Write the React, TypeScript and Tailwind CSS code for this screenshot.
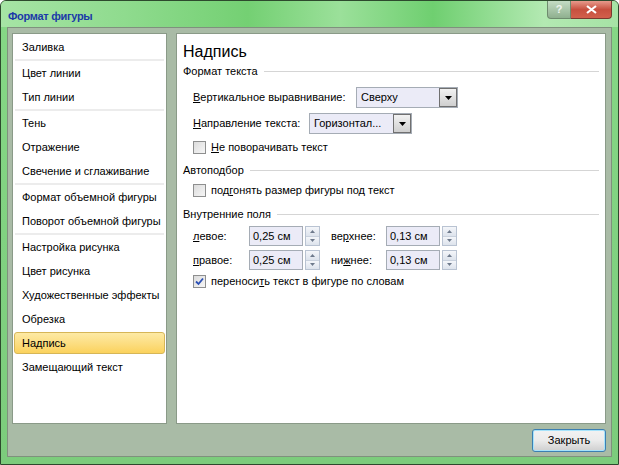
import { useState } from 'react';

const groups: string[][] = [
  ['Заливка'],
  ['Цвет линии', 'Тип линии'],
  ['Тень', 'Отражение', 'Свечение и сглаживание'],
  ['Формат объемной фигуры', 'Поворот объемной фигуры'],
  ['Настройка рисунка', 'Цвет рисунка', 'Художественные эффекты', 'Обрезка', 'Надпись', 'Замещающий текст'],
];

function Checkbox({ checked }: { checked?: boolean }) {
  return (
    <div className="w-[13px] h-[13px] border border-[#8e8f8f] bg-gradient-to-br from-[#dcdcdc] to-[#f6f6f6] flex items-center justify-center">
      {checked && (
        <svg width="9" height="9" viewBox="0 0 9 9">
          <path d="M1 4.5 L3.5 7 L8 1.5" stroke="#2a4fb5" strokeWidth="1.8" fill="none" />
        </svg>
      )}
    </div>
  );
}

function Combo({ value, width }: { value: string; width: string }) {
  return (
    <div className={`flex h-[21px] border border-[#a5acb5] bg-[#ebebf7] ${width}`}>
      <div className="flex-1 flex items-center pl-[4px] overflow-hidden whitespace-nowrap">{value}</div>
      <div className="w-[18px] border border-[#707070] bg-gradient-to-b from-[#f2f2f2] to-[#cfcfcf] flex items-center justify-center">
        <svg width="7" height="4" viewBox="0 0 7 4">
          <path d="M0 0 H7 L3.5 4 Z" fill="#000" />
        </svg>
      </div>
    </div>
  );
}

function Spinner({ value }: { value: string }) {
  return (
    <div className="flex items-center gap-[2px] w-[71px]">
      <div className="flex-1 h-[20px] border border-[#a5acb5] bg-[#ebebf7] flex items-center pl-[3px]">{value}</div>
      <div className="w-[15px] h-[20px] flex flex-col border border-[#b9c3d2]">
        <div className="flex-1 border-b border-[#c9d1dd] bg-gradient-to-b from-[#f4f6fa] to-[#dde3ec] flex items-center justify-center">
          <svg width="5" height="3" viewBox="0 0 5 3"><path d="M0 3 H5 L2.5 0 Z" fill="#6e7a8c" /></svg>
        </div>
        <div className="flex-1 bg-gradient-to-b from-[#f4f6fa] to-[#dde3ec] flex items-center justify-center">
          <svg width="5" height="3" viewBox="0 0 5 3"><path d="M0 0 H5 L2.5 3 Z" fill="#6e7a8c" /></svg>
        </div>
      </div>
    </div>
  );
}

function Section({ title }: { title: string }) {
  return (
    <div className="flex items-center h-[18px] ml-[6px] mr-[6px]">
      <span className="whitespace-nowrap">{title}</span>
      <div className="flex-1 h-px bg-[#d5d5d5] ml-[6px]" />
    </div>
  );
}

export default function App() {
  const [selected, setSelected] = useState('Надпись');

  return (
    <div
      className="w-[619px] h-[465px] flex flex-col bg-gradient-to-b from-[#86d886] to-[#7ccc7c] border border-[#2d4a2d] rounded-t-[6px] overflow-hidden text-[11px] text-black"
      style={{ fontFamily: '"Liberation Sans", Arial, sans-serif' }}
    >
      <div className="h-[26px] flex items-start bg-[linear-gradient(90deg,#a6e4a5_0%,#8fdb8e_20%,#74d073_40%,#9be09a_55%,#6fcf70_70%,#b3e9b2_88%,#a6e3a5_100%)]">
        <div className="pl-[7px] pt-[7px] font-bold text-[11px] tracking-[-0.3px] text-[#1b3aa8]">Формат фигуры</div>
        <div className="flex-1" />
        <div className="flex mr-[6px]">
          <div className="w-[24px] h-[18px] rounded-bl-[4px] border border-[#6e8b6e] border-t-0 bg-gradient-to-b from-[#c4dcc4] to-[#8fb08f] flex items-center justify-center text-[11px] font-bold text-[#eef4ee]">?</div>
          <div className="w-[41px] h-[18px] rounded-br-[4px] border border-[#7a3a30] border-t-0 border-l-0 bg-gradient-to-b from-[#e79a8c] via-[#c7503f] to-[#d2604c] flex items-center justify-center">
            <svg width="11" height="9" viewBox="0 0 11 9">
              <path d="M1 1 L10 8 M10 1 L1 8" stroke="#fff" strokeWidth="2.2" />
            </svg>
          </div>
        </div>
      </div>
      <div className="flex-1 flex flex-col mx-[6px] mb-[7px] bg-[#a9bba6] border border-[#7f917d] pt-[5px] pl-[4px] pr-[5px]">
        <div className="flex gap-[9px] h-[391px]">
          <div className="w-[155px] bg-white border border-[#8a9a88] pt-[1px] px-[1px]">
            {groups.map((g, gi) => (
              <div key={gi}>
                {gi > 0 && <div className="h-[2px] mx-[1px] bg-[#ececec]" />}
                {g.map((item) => (
                  <div
                    key={item}
                    onClick={() => setSelected(item)}
                    className="h-[24px] flex items-center"
                  >
                    <div
                      className={`w-full h-[22px] flex items-center pl-[7px] rounded-[3px] border ${
                        selected === item
                          ? 'border-[#d6b657] bg-gradient-to-b from-[#fdeaa4] to-[#fbd25c]'
                          : 'border-transparent'
                      }`}
                    >
                      {item}
                    </div>
                  </div>
                ))}
              </div>
            ))}
          </div>
          <div className="flex-1 bg-white border border-[#8a9a88] pt-[8px]">
            <div className="ml-[6px] text-[16px] leading-[20px]">Надпись</div>
            <Section title="Формат текста" />
            <div className="ml-[16px] mt-[7px] flex flex-col">
              <div className="flex items-center h-[21px]">
                <span className="w-[163px]"><u>В</u>ертикальное выравнивание:</span>
                <Combo value="Сверху" width="w-[102px]" />
              </div>
              <div className="flex items-center h-[21px] mt-[5px]">
                <span className="w-[116px]"><u>Н</u>аправление текста:</span>
                <Combo value="Горизонтал..." width="w-[103px]" />
              </div>
              <div className="flex items-center h-[18px] mt-[4px] gap-[5px]">
                <Checkbox />
                <span><u>Н</u>е поворачивать текст</span>
              </div>
            </div>
            <div className="mt-[5px]"><Section title="Автоподбор" /></div>
            <div className="ml-[16px] mt-[2px] flex items-center h-[18px] gap-[5px]">
              <Checkbox />
              <span>под<u>г</u>онять размер фигуры под текст</span>
            </div>
            <div className="mt-[6px]"><Section title="Внутренние поля" /></div>
            <div className="ml-[16px] mt-[3px] flex flex-col gap-[4px]">
              <div className="flex items-center h-[20px]">
                <span className="w-[56px]"><u>л</u>евое:</span>
                <Spinner value="0,25 см" />
                <span className="w-[66px] pl-[11px]">ве<u>р</u>хнее:</span>
                <Spinner value="0,13 см" />
              </div>
              <div className="flex items-center h-[20px]">
                <span className="w-[56px]"><u>п</u>равое:</span>
                <Spinner value="0,25 см" />
                <span className="w-[66px] pl-[11px]">ни<u>ж</u>нее:</span>
                <Spinner value="0,13 см" />
              </div>
              <div className="flex items-center h-[18px] gap-[5px] -mt-[2px]">
                <Checkbox checked />
                <span>переноси<u>т</u>ь текст в фигуре по словам</span>
              </div>
            </div>
          </div>
        </div>
        <div className="flex justify-end mt-[5px]">
          <button className="w-[74px] h-[23px] rounded-[3px] border border-[#3c7fb1] bg-gradient-to-b from-[#f2f2f2] via-[#ebebeb] to-[#cfcfcf] shadow-[inset_0_0_0_1px_#a6e3fb] text-[11px]">
            Закрыть
          </button>
        </div>
      </div>
    </div>
  );
}
